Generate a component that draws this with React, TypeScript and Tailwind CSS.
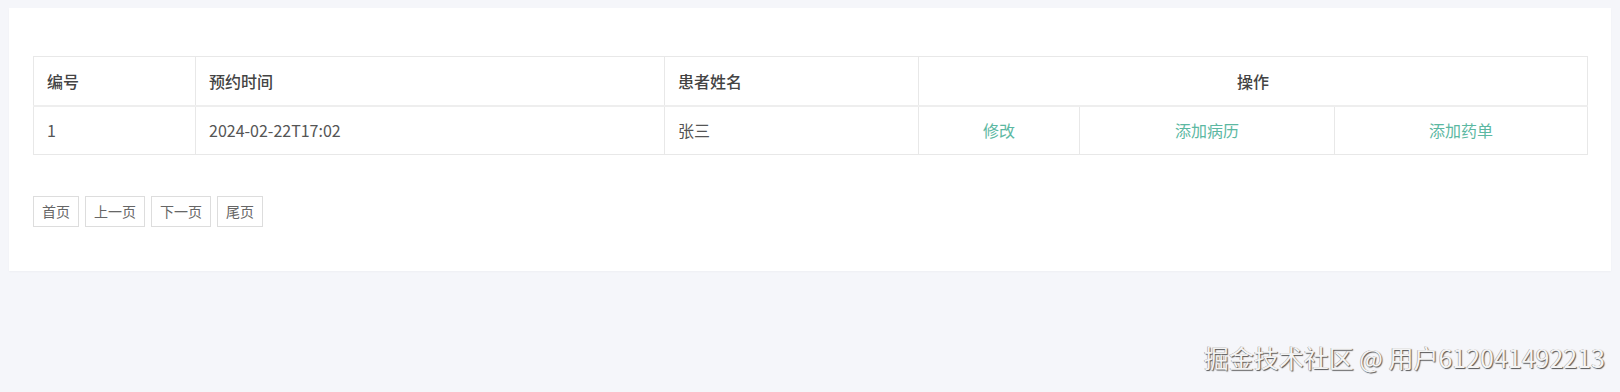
import React from "react";

const font = { fontFamily: '"Noto Sans CJK SC", "Noto Sans", sans-serif' };

export default function App() {
  return (
    <div
      className="relative min-h-[392px] w-full bg-[#f5f6fa] pt-[8px] px-[9px]"
      style={font}
    >
      <div className="bg-white pt-[48px] pb-[44px] px-[24px] shadow-[0_1px_2px_rgba(0,0,0,0.03)]">
        <table className="w-[1554px] table-fixed border-collapse text-[16px] text-[#555]">
          <colgroup>
            <col className="w-[162px]" />
            <col className="w-[469px]" />
            <col className="w-[254px]" />
            <col className="w-[161px]" />
            <col className="w-[255px]" />
            <col className="w-[253px]" />
          </colgroup>
          <thead>
            <tr className="h-[49px] border-b-2 border-[#eeeeee]">
              <th className="border border-[#e8e8e8] pl-[13px] text-left font-medium text-[#444]">编号</th>
              <th className="border border-[#e8e8e8] pl-[13px] text-left font-medium text-[#444]">预约时间</th>
              <th className="border border-[#e8e8e8] pl-[13px] text-left font-medium text-[#444]">患者姓名</th>
              <th colSpan={3} className="border border-[#e8e8e8] text-center font-medium text-[#444]">操作</th>
            </tr>
          </thead>
          <tbody>
            <tr className="h-[49px]">
              <td className="border border-[#e8e8e8] pl-[13px]">1</td>
              <td className="border border-[#e8e8e8] pl-[13px]">2024-02-22T17:02</td>
              <td className="border border-[#e8e8e8] pl-[13px]">张三</td>
              <td className="border border-[#e8e8e8] text-center text-[#5cb8a2]">修改</td>
              <td className="border border-[#e8e8e8] text-center text-[#5cb8a2]">添加病历</td>
              <td className="border border-[#e8e8e8] text-center text-[#5cb8a2]">添加药单</td>
            </tr>
          </tbody>
        </table>
        <div className="mt-[41px] flex gap-[6px] text-[14px] text-[#666]">
          <button className="h-[31px] w-[46px] border border-[#dddddd] bg-white">首页</button>
          <button className="h-[31px] w-[60px] border border-[#dddddd] bg-white">上一页</button>
          <button className="h-[31px] w-[60px] border border-[#dddddd] bg-white">下一页</button>
          <button className="h-[31px] w-[46px] border border-[#dddddd] bg-white">尾页</button>
        </div>
      </div>
      <div className="absolute right-[15px] top-[341px] text-[25px] leading-[32px] text-[#f4f4f4] [text-shadow:1px_1px_1px_#555,-0.5px_-0.5px_0.5px_#999]">
        掘金技术社区 @ 用户612041492213
      </div>
    </div>
  );
}
